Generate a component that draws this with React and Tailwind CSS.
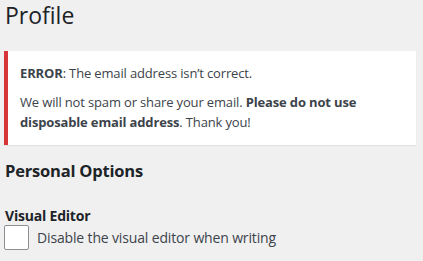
export default function App() {
  return (
    <div className="min-h-screen bg-[#f0f0f1] px-[4px] font-['Open_Sans',sans-serif] text-[#3c434a]">
      <h1 className="pl-px text-[23px] font-normal leading-[30px] text-[#1d2327]">Profile</h1>

      <div className="mt-[21px] mr-[3px] border-l-4 border-[#d63638] bg-white px-[12px] pt-[10px] pb-[11px] text-[13px] leading-[20px] tracking-[-0.15px] shadow-[0_1px_1px_rgba(0,0,0,0.06)]">
        <p className="py-[2px]">
          <strong className="font-bold">ERROR</strong>: The email address isn’t correct.
        </p>
        <p className="mt-[5px] py-[2px]">
          We will not spam or share your email. <strong className="font-bold">Please do not use disposable email address</strong>. Thank you!
        </p>
      </div>

      <h2 className="mt-[15px] pl-px text-[16.5px] font-bold leading-[22px] tracking-[-0.2px] text-[#1d2327]">Personal Options</h2>

      <div className="mt-[25px] pl-px">
        <div className="text-[14px] font-bold leading-[18px] tracking-[-0.2px] text-[#1d2327]">Visual Editor</div>
        <label className="flex items-center gap-[8px] text-[14px] tracking-[-0.15px] text-[#3c434a]">
          <span className="-ml-px h-[25px] w-[25px] rounded-[2px] border border-[#8c8f94] bg-white" />
          Disable the visual editor when writing
        </label>
      </div>
    </div>
  );
}
